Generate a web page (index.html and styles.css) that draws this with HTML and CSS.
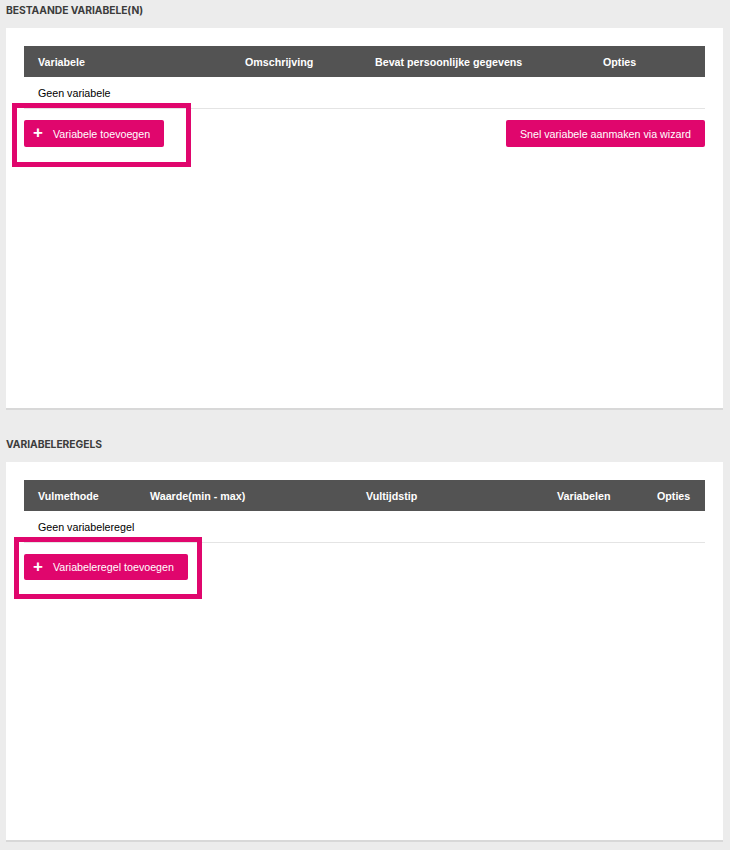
FILE: index.html
```html
<!doctype html>
<html>
    <head>
        <meta name="viewport" content="width=device-width, initial-scale=1.0">
        <title>Variabelen</title>
        <link rel="stylesheet" href="styles.css">
    </head>
    <body>
        <div class="page">
            <h2 class="section-title">Bestaande variabele(n)</h2>
            <div class="panel panel-vars">
                <table class="data-table">
                    <colgroup>
                        <col style="width: 207px">
                        <col style="width: 130px">
                        <col style="width: 228px">
                        <col>
                    </colgroup>
                    <thead>
                        <tr>
                            <th>Variabele</th>
                            <th>Omschrijving</th>
                            <th>Bevat persoonlijke gegevens</th>
                            <th>Opties</th>
                        </tr>
                    </thead>
                    <tbody>
                        <tr>
                            <td colspan="4">Geen variabele</td>
                        </tr>
                    </tbody>
                </table>
                <div class="actions">
                    <button class="btn"><span class="plus">+</span>Variabele toevoegen</button>
                    <button class="btn btn-plain">Snel variabele aanmaken via wizard</button>
                </div>
                <div class="highlight highlight-vars"></div>
            </div>

            <h2 class="section-title section-title-2">Variabeleregels</h2>
            <div class="panel panel-rules">
                <table class="data-table">
                    <colgroup>
                        <col style="width: 112px">
                        <col style="width: 216px">
                        <col style="width: 191px">
                        <col style="width: 100px">
                        <col>
                    </colgroup>
                    <thead>
                        <tr>
                            <th>Vulmethode</th>
                            <th>Waarde(min - max)</th>
                            <th>Vultijdstip</th>
                            <th>Variabelen</th>
                            <th>Opties</th>
                        </tr>
                    </thead>
                    <tbody>
                        <tr>
                            <td colspan="5">Geen variabeleregel</td>
                        </tr>
                    </tbody>
                </table>
                <div class="actions">
                    <button class="btn btn-rule"><span class="plus">+</span>Variabeleregel toevoegen</button>
                </div>
                <div class="highlight highlight-rules"></div>
            </div>
        </div>
    </body>
</html>
```

FILE: styles.css
```css
body {
    margin: 0;
    padding: 0;
    background-color: #ececec;
    font-family: "Liberation Sans", Arial, sans-serif;
    color: #000;
}

.page {
    padding: 0 7px 0 6px;
}

.section-title {
    margin: 0;
    padding-top: 4px;
    height: 24px;
    font-family: Inter, "Open Sans", sans-serif;
    font-size: 10.3px;
    font-weight: 700;
    text-transform: uppercase;
    color: #3c3c3c;
    letter-spacing: -0.05px;
}

.section-title-2 {
    padding-top: 28px;
}

.panel {
    position: relative;
    background-color: #fff;
    border-bottom: 2px solid #d8d8d8;
    padding: 18px 18px 0 18px;
}

.panel-vars {
    height: 362px;
}

.panel-rules {
    height: 360px;
}

.data-table {
    width: 100%;
    border-collapse: collapse;
    table-layout: fixed;
    font-size: 10.7px;
}

.data-table th {
    background-color: #535353;
    color: #fff;
    font-weight: 700;
    text-align: left;
    height: 31px;
    padding: 0 0 0 14px;
}

.data-table td {
    height: 31px;
    padding: 0 0 0 14px;
    border-bottom: 1px solid #e4e4e4;
}

.actions {
    display: flex;
    justify-content: space-between;
    margin-top: 11px;
}

.btn {
    display: flex;
    align-items: center;
    height: 27px;
    padding: 0 14px 0 9px;
    border: none;
    border-radius: 2px;
    background-color: #e0066d;
    color: #fff;
    font-family: inherit;
    font-size: 10.7px;
}

.btn-plain {
    padding: 0 14px;
}

.btn-rule {
    height: 26px;
    padding-right: 14px;
}

.plus {
    font-size: 17px;
    font-weight: 700;
    line-height: 1;
    margin-right: 10px;
    margin-top: -2px;
}

.highlight {
    position: absolute;
    border: 5px solid #e0066d;
    box-sizing: border-box;
}

.highlight-vars {
    left: 6px;
    top: 75px;
    width: 179px;
    height: 64px;
}

.highlight-rules {
    left: 8px;
    top: 75px;
    width: 188px;
    height: 62px;
}
```
